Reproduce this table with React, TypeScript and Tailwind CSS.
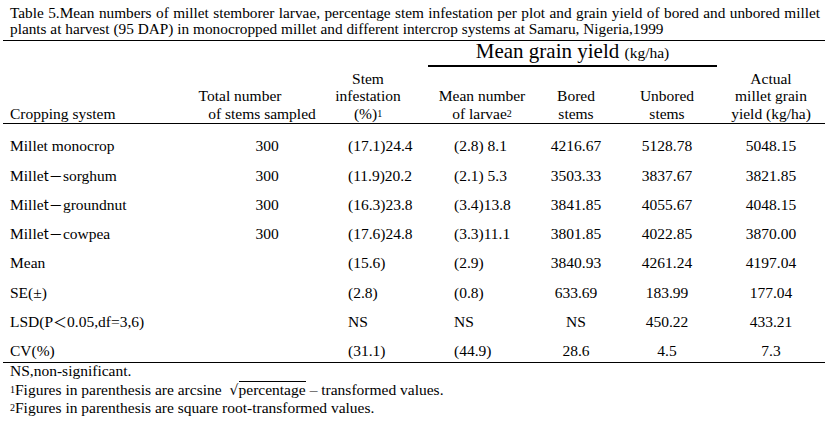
import React from "react";

const rows: string[][] = [
  ["Millet monocrop", "300", "(17.1)24.4", "(2.8) 8.1", "4216.67", "5128.78", "5048.15"],
  ["Millet－sorghum", "300", "(11.9)20.2", "(2.1) 5.3", "3503.33", "3837.67", "3821.85"],
  ["Millet－groundnut", "300", "(16.3)23.8", "(3.4)13.8", "3841.85", "4055.67", "4048.15"],
  ["Millet－cowpea", "300", "(17.6)24.8", "(3.3)11.1", "3801.85", "4022.85", "3870.00"],
  ["Mean", "", "(15.6)", "(2.9)", "3840.93", "4261.24", "4197.04"],
  ["SE(±)", "", "(2.8)", "(0.8)", "633.69", "183.99", "177.04"],
  ["LSD(P＜0.05,df=3,6)", "", "NS", "NS", "NS", "450.22", "433.21"],
  ["CV(%)", "", "(31.1)", "(44.9)", "28.6", "4.5", "7.3"],
];

const cjk = "font-['Noto_Sans_CJK_SC',sans-serif] text-[14px] leading-none";

function CropName({ name }: { name: string }) {
  if (name.startsWith("Millet－")) {
    return (
      <span>
        Mille<span className={cjk}>t－</span>
        {name.slice(7)}
      </span>
    );
  }
  if (name.startsWith("LSD")) {
    return (
      <span>
        LSD(P<span className={cjk}>＜</span>0.05,df=3,6)
      </span>
    );
  }
  return <span>{name}</span>;
}

function Sup({ n }: { n: string }) {
  return <sup className="text-[10px] leading-none relative -top-[2px]">{n}</sup>;
}

export default function App() {
  return (
    <div className="w-[828px] h-[430px] bg-white text-black font-['Liberation_Serif','Times_New_Roman',serif] text-[15.5px] overflow-hidden whitespace-nowrap">
      {/* Caption */}
      <div className="pl-[10px] pt-[5px] leading-[16px] text-[15.3px]">
        <div className="w-[810px] text-justify [text-align-last:justify] whitespace-normal">
          Table 5.Mean numbers of millet stemborer larvae, percentage stem infestation per plot and grain yield of bored and unbored millet
        </div>
        <div>
          plants at harvest<span className="ml-[4px]">(</span>95 DAP)<span className="ml-[4px]">in</span> monocropped millet and
          different intercrop systems at Samaru, Nigeria,1999
        </div>
      </div>

      <div className="mt-[3px] px-[3px]">
        <div className="h-px bg-black" />

        {/* Spanning heading */}
        <div className="pl-[425px]">
          <div className="w-[289px] text-center text-[21px] leading-[21px] pb-[3px] border-b-2 border-black">
            Mean grain yield <span className="text-[15.5px] leading-none">(kg/ha)</span>
          </div>
        </div>

        {/* Column headers */}
        <div className="flex items-end h-[56px] pb-[1px] leading-[17.5px]">
          <div className="w-[197px] pl-[7px]">Cropping system</div>
          <div className="w-[124px] flex flex-col items-center">
            <span className="pr-[44px]">Total number</span>
            <span>of stems sampled</span>
          </div>
          <div className="w-[88px] flex flex-col items-center">
            <span>Stem</span>
            <span>infestation</span>
            <span>
              (%)<Sup n="1" />
            </span>
          </div>
          <div className="w-[140px] flex flex-col items-center">
            <span>Mean number</span>
            <span>
              of larvae<Sup n="2" />
            </span>
          </div>
          <div className="w-[48px] flex flex-col items-center">
            <span>Bored</span>
            <span>stems</span>
          </div>
          <div className="w-[134px] flex flex-col items-center">
            <span>Unbored</span>
            <span>stems</span>
          </div>
          <div className="w-[74px] flex flex-col items-center">
            <span>Actual</span>
            <span>millet grain</span>
            <span>yield (kg/ha)</span>
          </div>
        </div>
        <div className="h-px bg-black" />

        {/* Body */}
        <div className="pt-[1px] pb-[3px]">
          {rows.map((r) => (
            <div key={r[0]} className="flex items-end h-[29.3px] leading-[17px]">
              <div className="w-[197px] pl-[7px]">
                <CropName name={r[0]} />
              </div>
              <div className="w-[124px] flex justify-center pl-[10px]">{r[1]}</div>
              <div className="w-[88px] flex pl-[24px]">{r[2]}</div>
              <div className="w-[140px] flex pl-[42px]">{r[3]}</div>
              <div className="w-[48px] flex justify-center">{r[4]}</div>
              <div className="w-[134px] flex justify-center">{r[5]}</div>
              <div className="w-[74px] flex justify-center">{r[6]}</div>
            </div>
          ))}
        </div>
        <div className="h-px bg-black" />
      </div>

      {/* Notes */}
      <div className="pl-[10px]">
        <div className="leading-[16px]">NS,non-significant.</div>
        <div className="leading-[18px] mt-[2px] flex items-baseline">
          <Sup n="1" />
          <span>Figures in parenthesis are arcsine</span>
          <span className="ml-[8px] font-['DejaVu_Serif',serif] text-[14px]">√</span>
          <span className="border-t border-black leading-[15px]">percentage</span>
          <span className="ml-[4px]">– transformed values.</span>
        </div>
        <div className="leading-[18px]">
          <Sup n="2" />
          Figures in parenthesis are square root-transformed values.
        </div>
      </div>
    </div>
  );
}
